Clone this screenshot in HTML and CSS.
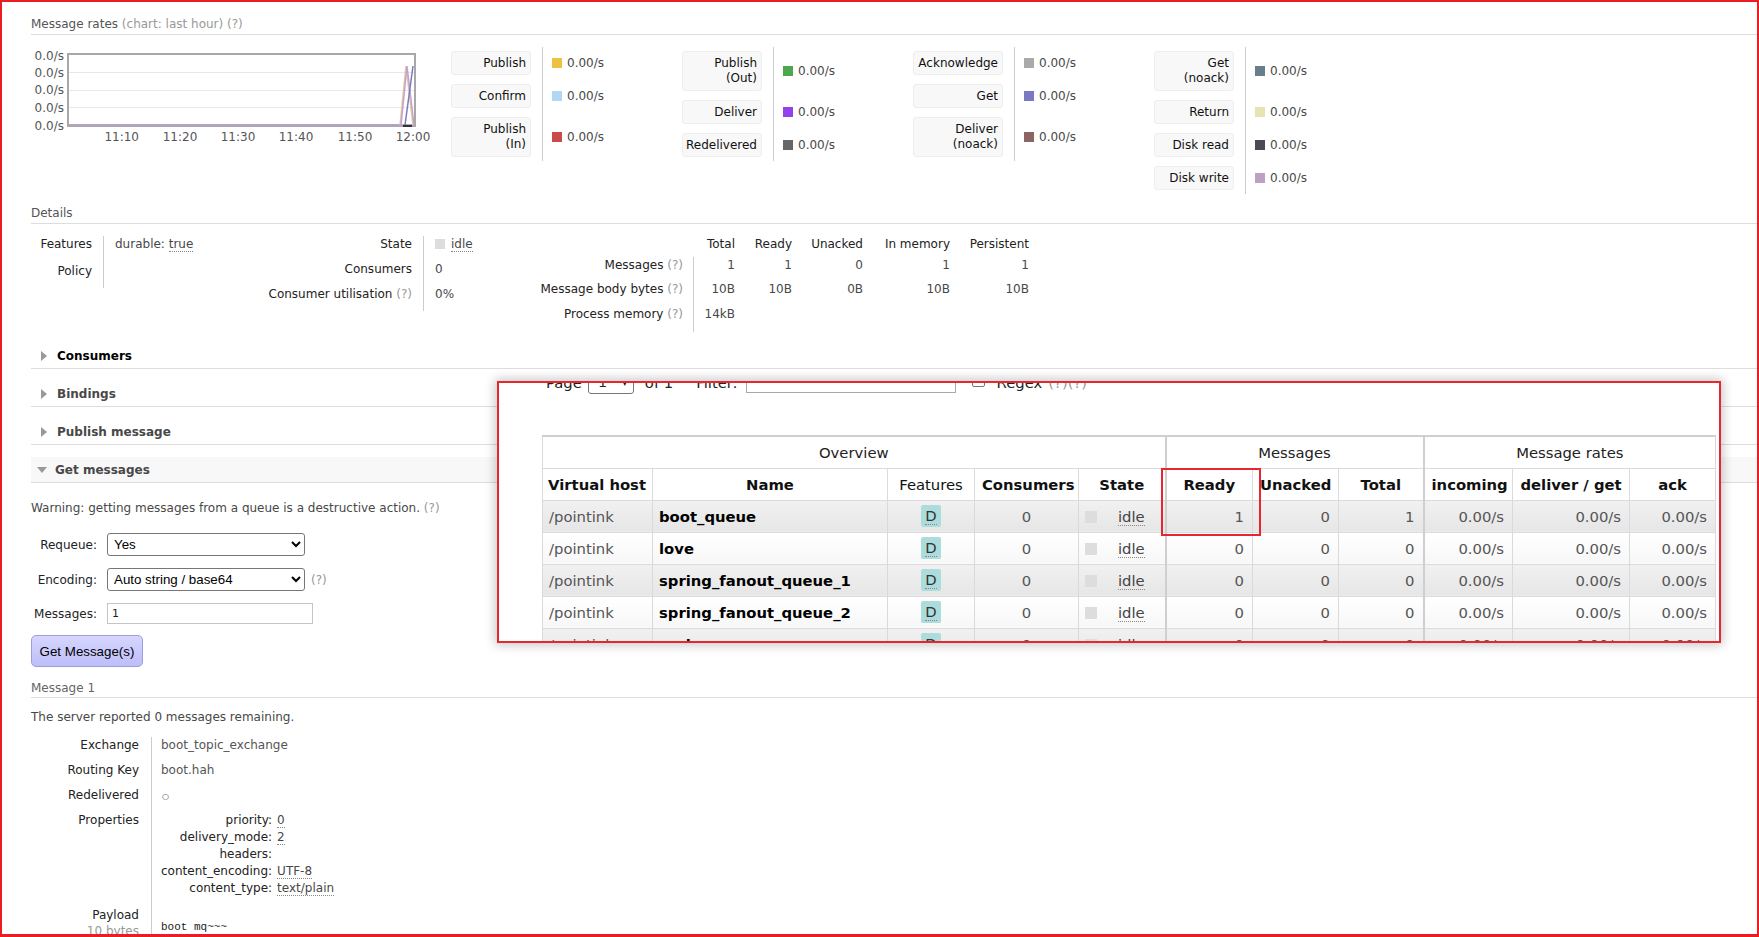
FILE: index.html
```html
<!DOCTYPE html>
<html lang="en">
<head>
<meta charset="utf-8">
<title>Queue boot_queue</title>
<link rel="stylesheet" href="styles.css">
</head>
<body>
<div class="frame">
  <div class="page">
    <h3 class="sec-title">Message rates <span class="muted">(chart: last hour) (?)</span></h3>

    <div class="rates">
      <div class="chart">
        <svg class="chart-svg" width="420" height="100" viewBox="0 0 420 100">
          <line class="gl" x1="38" y1="25.5" x2="383" y2="25.5"/>
          <line class="gl" x1="38" y1="43.5" x2="383" y2="43.5"/>
          <line class="gl" x1="38" y1="60.5" x2="383" y2="60.5"/>
          <rect x="37" y="7" width="347" height="72" fill="none" stroke="#a8a8a8" stroke-width="2"/>
          <line x1="38" y1="78" x2="383" y2="78" stroke="#b8a0c4" stroke-width="2"/>
          <polyline points="369,78 375,19 382,78" fill="none" stroke="#e2c8a6" stroke-width="1.5"/>
          <polyline points="370,78 376,19 383,78" fill="none" stroke="#c4a2c8" stroke-width="1.5"/>
          <line x1="374" y1="78" x2="382" y2="19" stroke="#7c79c3" stroke-width="1.5"/>
          <line x1="372" y1="79" x2="381" y2="79" stroke="#333" stroke-width="2"/>
          <text class="yl" x="33" y="13.4">0.0/s</text>
          <text class="yl" x="33" y="29.7">0.0/s</text>
          <text class="yl" x="33" y="47.4">0.0/s</text>
          <text class="yl" x="33" y="64.7">0.0/s</text>
          <text class="yl" x="33" y="83.4">0.0/s</text>
          <text class="xl" x="90.7" y="94.4">11:10</text>
          <text class="xl" x="149" y="94.4">11:20</text>
          <text class="xl" x="207" y="94.4">11:30</text>
          <text class="xl" x="265" y="94.4">11:40</text>
          <text class="xl" x="324" y="94.4">11:50</text>
          <text class="xl" x="382" y="94.4">12:00</text>
        </svg>
      </div>

      <div class="lg">
        <div class="lg-labels">
          <div class="lbox">Publish</div>
          <div class="lbox">Confirm</div>
          <div class="lbox tall">Publish<br>(In)</div>
        </div>
        <div class="lg-vals">
          <div class="lval"><i class="sw s-publish"></i>0.00/s</div>
          <div class="lval"><i class="sw s-confirm"></i>0.00/s</div>
          <div class="lval tall"><i class="sw s-pubin"></i>0.00/s</div>
        </div>
      </div>

      <div class="lg">
        <div class="lg-labels">
          <div class="lbox tall">Publish<br>(Out)</div>
          <div class="lbox">Deliver</div>
          <div class="lbox">Redelivered</div>
        </div>
        <div class="lg-vals">
          <div class="lval tall"><i class="sw s-pubout"></i>0.00/s</div>
          <div class="lval"><i class="sw s-deliver"></i>0.00/s</div>
          <div class="lval"><i class="sw s-redeliver"></i>0.00/s</div>
        </div>
      </div>

      <div class="lg">
        <div class="lg-labels wide">
          <div class="lbox">Acknowledge</div>
          <div class="lbox">Get</div>
          <div class="lbox tall">Deliver<br>(noack)</div>
        </div>
        <div class="lg-vals">
          <div class="lval"><i class="sw s-ack"></i>0.00/s</div>
          <div class="lval"><i class="sw s-get"></i>0.00/s</div>
          <div class="lval tall"><i class="sw s-delnoack"></i>0.00/s</div>
        </div>
      </div>

      <div class="lg">
        <div class="lg-labels">
          <div class="lbox tall">Get<br>(noack)</div>
          <div class="lbox">Return</div>
          <div class="lbox">Disk read</div>
          <div class="lbox">Disk write</div>
        </div>
        <div class="lg-vals">
          <div class="lval tall"><i class="sw s-getnoack"></i>0.00/s</div>
          <div class="lval"><i class="sw s-return"></i>0.00/s</div>
          <div class="lval"><i class="sw s-diskr"></i>0.00/s</div>
          <div class="lval"><i class="sw s-diskw"></i>0.00/s</div>
        </div>
      </div>
    </div>

    <h3 class="sec-title details-title">Details</h3>
    <div class="details">
      <div class="kv kv-a">
        <div class="k">Features</div><div class="v">durable: <abbr class="dot">true</abbr></div>
        <div class="k">Policy</div><div class="v"></div>
      </div>
      <div class="kv kv-b">
        <div class="k">State</div><div class="v"><span class="state-sq"></span><abbr class="dot">idle</abbr></div>
        <div class="k">Consumers</div><div class="v">0</div>
        <div class="k">Consumer utilisation <span class="muted">(?)</span></div><div class="v">0%</div>
      </div>
      <div class="mtable">
        <div></div><div class="h">Total</div><div class="h">Ready</div><div class="h">Unacked</div><div class="h">In memory</div><div class="h">Persistent</div>
        <div class="k">Messages <span class="muted">(?)</span></div><div class="n first">1</div><div class="n">1</div><div class="n">0</div><div class="n">1</div><div class="n">1</div>
        <div class="k">Message body bytes <span class="muted">(?)</span></div><div class="n first">10B</div><div class="n">10B</div><div class="n">0B</div><div class="n">10B</div><div class="n">10B</div>
        <div class="k">Process memory <span class="muted">(?)</span></div><div class="n first">14kB</div><div class="n"></div><div class="n"></div><div class="n"></div><div class="n"></div>
      </div>
    </div>

    <div class="sec first-sec dark"><span class="tri-r"></span>Consumers</div>
    <div class="sec"><span class="tri-r"></span>Bindings</div>
    <div class="sec"><span class="tri-r"></span>Publish message</div>
    <div class="sec open"><span class="tri-d"></span>Get messages</div>

    <p class="warn">Warning: getting messages from a queue is a destructive action. <span class="muted">(?)</span></p>

    <div class="form">
      <label class="fl">Requeue:</label>
      <div class="fc"><select class="sel"><option>Yes</option><option>No</option></select></div>
      <label class="fl">Encoding:</label>
      <div class="fc"><select class="sel"><option>Auto string / base64</option><option>base64</option></select><span class="muted help">(?)</span></div>
      <label class="fl">Messages:</label>
      <div class="fc"><input class="inp" type="text" value="1"></div>
    </div>
    <button class="btn" type="button">Get Message(s)</button>

    <h3 class="sub-title">Message 1</h3>
    <p class="server">The server reported 0 messages remaining.</p>

    <div class="msg">
      <div class="k">Exchange</div><div class="v">boot_topic_exchange</div>
      <div class="k">Routing Key</div><div class="v">boot.hah</div>
      <div class="k">Redelivered</div><div class="v"><span class="circ">○</span></div>
      <div class="k">Properties</div>
      <div class="v">
        <div class="props">
          <div class="pk">priority:</div><div class="pv"><abbr class="dot">0</abbr></div>
          <div class="pk">delivery_mode:</div><div class="pv"><abbr class="dot">2</abbr></div>
          <div class="pk">headers:</div><div class="pv"></div>
          <div class="pk">content_encoding:</div><div class="pv"><abbr class="dot">UTF-8</abbr></div>
          <div class="pk">content_type:</div><div class="pv"><abbr class="dot">text/plain</abbr></div>
        </div>
      </div>
      <div class="k">Payload<br><span class="muted">10 bytes</span></div>
      <div class="v"><pre class="payload">boot mq~~~</pre></div>
    </div>
  </div>

  <div class="shot">
    <div class="shot-bar">
      <span>Page</span>
      <span class="pg-sel"><span>1</span><span class="pg-arr">▾</span></span>
      <span class="of">of 1</span>
      <span class="flt">Filter:</span>
      <span class="flt-inp"></span>
      <span class="cbx"></span>
      <span class="rgx">Regex</span>
      <span class="muted qq">(?)(?)</span>
    </div>
    <table class="qt">
      <colgroup>
        <col class="w-vh"><col class="w-name"><col class="w-feat"><col class="w-cons"><col class="w-state">
        <col class="w-ready"><col class="w-unack"><col class="w-total"><col class="w-inc"><col class="w-del"><col class="w-ack">
      </colgroup>
      <thead>
        <tr class="grp">
          <th colspan="5">Overview</th>
          <th colspan="3" class="gsep">Messages</th>
          <th colspan="3" class="gsep">Message rates</th>
        </tr>
        <tr class="cols">
          <th class="l">Virtual host</th>
          <th>Name</th>
          <th class="nb">Features</th>
          <th>Consumers</th>
          <th>State</th>
          <th class="gsep">Ready</th>
          <th>Unacked</th>
          <th>Total</th>
          <th class="gsep">incoming</th>
          <th>deliver / get</th>
          <th>ack</th>
        </tr>
      </thead>
      <tbody>
        <tr class="odd">
          <td class="vh">/pointink</td><td class="nm">boot_queue</td>
          <td class="c"><span class="badge"><abbr class="dot">D</abbr></span></td><td class="c">0</td>
          <td class="st"><span class="sq"></span><abbr class="dot">idle</abbr></td>
          <td class="r gsep">1</td><td class="r">0</td><td class="r">1</td>
          <td class="r gsep">0.00/s</td><td class="r">0.00/s</td><td class="r">0.00/s</td>
        </tr>
        <tr class="even">
          <td class="vh">/pointink</td><td class="nm">love</td>
          <td class="c"><span class="badge"><abbr class="dot">D</abbr></span></td><td class="c">0</td>
          <td class="st"><span class="sq"></span><abbr class="dot">idle</abbr></td>
          <td class="r gsep">0</td><td class="r">0</td><td class="r">0</td>
          <td class="r gsep">0.00/s</td><td class="r">0.00/s</td><td class="r">0.00/s</td>
        </tr>
        <tr class="odd">
          <td class="vh">/pointink</td><td class="nm">spring_fanout_queue_1</td>
          <td class="c"><span class="badge"><abbr class="dot">D</abbr></span></td><td class="c">0</td>
          <td class="st"><span class="sq"></span><abbr class="dot">idle</abbr></td>
          <td class="r gsep">0</td><td class="r">0</td><td class="r">0</td>
          <td class="r gsep">0.00/s</td><td class="r">0.00/s</td><td class="r">0.00/s</td>
        </tr>
        <tr class="even">
          <td class="vh">/pointink</td><td class="nm">spring_fanout_queue_2</td>
          <td class="c"><span class="badge"><abbr class="dot">D</abbr></span></td><td class="c">0</td>
          <td class="st"><span class="sq"></span><abbr class="dot">idle</abbr></td>
          <td class="r gsep">0</td><td class="r">0</td><td class="r">0</td>
          <td class="r gsep">0.00/s</td><td class="r">0.00/s</td><td class="r">0.00/s</td>
        </tr>
        <tr class="odd">
          <td class="vh">/pointink</td><td class="nm">spring_queue</td>
          <td class="c"><span class="badge"><abbr class="dot">D</abbr></span></td><td class="c">0</td>
          <td class="st"><span class="sq"></span><abbr class="dot">idle</abbr></td>
          <td class="r gsep">0</td><td class="r">0</td><td class="r">0</td>
          <td class="r gsep">0.00/s</td><td class="r">0.00/s</td><td class="r">0.00/s</td>
        </tr>
      </tbody>
    </table>
    <div class="hl"></div>
  </div>
</div>
</body>
</html>
```

FILE: styles.css
```css
* { box-sizing: border-box; }
html, body { margin: 0; padding: 0; background: #fff; }
body {
  font-family: "DejaVu Sans", Verdana, sans-serif;
  font-size: 12px;
  color: #222;
}
.frame {
  position: relative;
  width: 1759px;
  height: 937px;
  border: 2px solid #ec1c24;
  border-bottom-width: 3px;
  overflow: hidden;
  background: #fff;
}
.page { padding-left: 29px; }
.muted { color: #999; }
abbr.dot { text-decoration: none; border-bottom: 1px dotted #888; }

.sec-title {
  margin: 14px 0 0;
  font-size: 12px;
  font-weight: normal;
  color: #555;
  line-height: 16px;
  padding-bottom: 2px;
  border-bottom: 1px solid #ddd;
}
.details-title { margin-top: 11px; }

/* rates */
.rates { display: flex; align-items: flex-start; margin-top: 12px; }
.chart { width: 420px; flex: none; }
.chart-svg { display: block; }
.chart-svg text { font-family: "DejaVu Sans", Verdana, sans-serif; font-size: 12px; fill: #555; }
.chart-svg .yl { text-anchor: end; }
.chart-svg .xl { text-anchor: middle; }
.chart-svg .gl { stroke: #e8e8e8; stroke-width: 1; }

.lg { display: flex; flex: none; }
.lg-labels {
  width: 80px;
  margin-right: 11px;
  padding: 4px 0;
  display: flex;
  flex-direction: column;
  gap: 9px;
}
.lg-labels.wide { width: 90px; }
.lbox {
  height: 24px;
  background: #f8f8f8;
  border: 1px solid #eee;
  border-radius: 3px;
  padding: 0 4px;
  display: flex;
  flex-direction: column;
  justify-content: center;
  align-items: flex-end;
  text-align: right;
  line-height: 15px;
  color: #111;
  white-space: nowrap;
}
.lbox.tall { height: 40px; }
.lg-vals {
  width: 140px;
  border-left: 1px solid #ccc;
  padding: 4px 0 4px 9px;
  display: flex;
  flex-direction: column;
  gap: 9px;
}
.lval { height: 24px; display: flex; align-items: center; color: #484848; }
.lval.tall { height: 40px; }
.sw { display: block; width: 10px; height: 10px; margin-right: 5px; flex: none; }
.s-publish { background: #edc240; }
.s-confirm { background: #afd8f8; }
.s-pubin { background: #cb4b4b; }
.s-pubout { background: #4da74d; }
.s-deliver { background: #9440ed; }
.s-redeliver { background: #666; }
.s-ack { background: #aaa; }
.s-get { background: #7c79c3; }
.s-delnoack { background: #8d6464; }
.s-getnoack { background: #687f8b; }
.s-return { background: #e6e4b3; }
.s-diskr { background: #4b4a55; }
.s-diskw { background: #bda0c4; }

/* details */
.details { display: flex; align-items: flex-start; margin-top: 12px; }
.kv { display: grid; line-height: 16px; flex: none; }
.kv-a { grid-template-columns: 72px 100px; grid-template-rows: 27px 25px; }
.kv-b { grid-template-columns: 220px 50px; grid-template-rows: 25px 25px 25px; }
.kv .k { text-align: right; padding-right: 11px; color: #222; white-space: nowrap; }
.kv .v { border-left: 1px solid #ccc; padding-left: 11px; color: #484848; white-space: nowrap; }
.state-sq { display: inline-block; width: 10px; height: 10px; background: #ddd; margin-right: 6px; vertical-align: -1px; }

.mtable {
  display: grid;
  flex: none;
  line-height: 16px;
  grid-template-columns: 220px 42px 57px 71px 87px 79px;
  grid-template-rows: 21px 24px 25px 26px;
}
.mtable .h { text-align: right; color: #222; white-space: nowrap; }
.mtable .k { text-align: right; padding-right: 10px; color: #222; white-space: nowrap; }
.mtable .n { text-align: right; color: #484848; white-space: nowrap; }
.mtable .first { border-left: 1px solid #ccc; }

/* collapsible sections */
.sec {
  height: 26px;
  margin-top: 12px;
  border-bottom: 1px solid #ddd;
  display: flex;
  align-items: center;
  padding-left: 10px;
  font-weight: bold;
  color: #484848;
}
.sec.first-sec { margin-top: 11px; }
.sec.dark { color: #000; }
.sec.open { background: #f8f8f8; }
.tri-r {
  width: 0; height: 0;
  border-left: 6px solid #999;
  border-top: 5px solid transparent;
  border-bottom: 5px solid transparent;
  margin-right: 10px;
}
.tri-d {
  width: 0; height: 0;
  border-top: 6px solid #999;
  border-left: 5.5px solid transparent;
  border-right: 5.5px solid transparent;
  margin-left: -4px;
  margin-right: 8px;
}

.warn { margin: 17px 0 0; line-height: 16px; color: #484848; }

.form {
  display: grid;
  grid-template-columns: 66px auto;
  grid-template-rows: 23px 23px 21px;
  column-gap: 10px;
  row-gap: 12px;
  align-items: center;
  margin-top: 17px;
  justify-content: start;
}
.fl { text-align: right; color: #222; white-space: nowrap; }
.fc { display: flex; align-items: center; }
.sel {
  width: 198px;
  height: 23px;
  font-family: "Liberation Sans", Arial, sans-serif;
  font-size: 13.33px;
  color: #000;
  border: 1px solid #767676;
  border-radius: 3px;
  background: #fff;
  padding: 0 2px;
  margin: 0;
}
.help { margin-left: 6px; }
.inp {
  width: 206px;
  height: 21px;
  border: 1px solid #c4c4c4;
  padding: 0 4px;
  margin: 0;
  font-family: "DejaVu Sans", Verdana, sans-serif;
  font-size: 11px;
  color: #222;
}
.btn {
  display: block;
  width: 112px;
  height: 32px;
  margin-top: 11px;
  border: 1px solid #9c9ce2;
  border-radius: 5px;
  background: linear-gradient(#d6d6ff, #bebef9);
  font-family: "Liberation Sans", Arial, sans-serif;
  font-size: 13.33px;
  color: #000;
  padding: 0;
}
.sub-title {
  margin: 13px 0 0;
  font-size: 12px;
  font-weight: normal;
  color: #666;
  line-height: 16px;
  padding-bottom: 1px;
  border-bottom: 1px solid #ddd;
}
.server { margin: 11px 0 0; line-height: 16px; color: #484848; }

.msg {
  display: grid;
  grid-template-columns: 120px auto;
  grid-template-rows: 25px 25px 25px 95px auto;
  justify-content: start;
  margin-top: 12px;
  line-height: 16px;
}
.msg .k { text-align: right; padding-right: 12px; color: #222; white-space: nowrap; }
.msg .v { border-left: 1px solid #ccc; padding-left: 9px; color: #555; }
.circ { font-size: 8px; color: #444; line-height: 16px; padding-left: 1px; }
.props {
  display: grid;
  grid-template-columns: auto auto;
  column-gap: 5px;
  line-height: 17px;
  justify-content: start;
}
.pk { text-align: right; color: #222; white-space: nowrap; }
.pv { color: #484848; white-space: nowrap; }
.payload {
  margin: 0;
  padding-top: 13px;
  font-family: "Liberation Mono", "DejaVu Sans Mono", monospace;
  font-size: 11px;
  line-height: 14px;
  color: #222;
}

/* pasted screenshot overlay */
.shot {
  position: absolute;
  left: 495px;
  top: 379px;
  width: 1224px;
  height: 262px;
  border: 2px solid #e8262d;
  background: #fff;
  box-shadow: 0 0 10px 2px rgba(0, 0, 0, 0.22);
  overflow: hidden;
  font-size: 14.8px;
  color: #222;
}
.shot-bar {
  display: flex;
  align-items: center;
  height: 26px;
  margin-top: -14px;
  padding-left: 47px;
  white-space: nowrap;
}
.pg-sel {
  width: 46px;
  height: 24px;
  margin-left: 6px;
  border: 1px solid #767676;
  border-radius: 3px;
  display: flex;
  align-items: center;
  justify-content: space-between;
  padding: 0 5px 0 10px;
  font-family: "Liberation Sans", Arial, sans-serif;
  font-size: 14px;
}
.pg-arr { font-size: 11px; }
.of { margin-left: 11px; }
.flt { margin-left: 23px; }
.flt-inp { width: 210px; height: 22px; margin-left: 8px; border: 1px solid #a9a9a9; }
.cbx { width: 13px; height: 13px; margin-left: 16px; border: 1px solid #767676; border-radius: 2px; margin-top: -3px; }
.rgx { margin-left: 12px; }
.qq { margin-left: 6px; }

.qt {
  border-collapse: collapse;
  table-layout: fixed;
  width: 1173px;
  margin: 40px 0 0 43px;
  font-size: 14.8px;
}
.w-vh { width: 110px; }
.w-name { width: 235px; }
.w-feat { width: 87px; }
.w-cons { width: 104px; }
.w-state { width: 87px; }
.w-ready { width: 87px; }
.w-unack { width: 86px; }
.w-total { width: 85px; }
.w-inc { width: 89px; }
.w-del { width: 117px; }
.w-ack { width: 86px; }
.qt th, .qt td {
  height: 32px;
  padding: 0 7px;
  border: 1px solid #dadada;
  white-space: nowrap;
  overflow: hidden;
  vertical-align: middle;
}
.qt th { text-align: center; color: #111; background: #fff; }
.qt tr.grp th { font-weight: normal; color: #222; border-top: 2px solid #cfcfcf; }
.qt tr.cols th { font-weight: bold; }
.qt tr.cols th.nb { font-weight: normal; }
.qt th.l { text-align: left; padding-left: 5px; }
.qt .gsep { border-left: 2px solid #cfcfcf; }
.qt tr.odd td { background: linear-gradient(#f1f1f1, #e6e6e6); }
.qt tr.even td { background: linear-gradient(#ffffff, #f7f7f7); }
.qt td.vh { color: #555; padding-left: 6px; }
.qt td.nm { font-weight: bold; color: #000; padding-left: 6px; }
.qt td.c { text-align: center; color: #555; }
.qt td.r { text-align: right; color: #555; padding-right: 8px; }
.qt td.st { padding-left: 6px; color: #444; }
.badge {
  display: inline-block;
  width: 20px;
  height: 22px;
  line-height: 21px;
  background: #acdcdc;
  border-radius: 2px;
  color: #333;
  text-align: center;
}
.sq {
  display: inline-block;
  width: 12px;
  height: 12px;
  background: #ddd;
  margin-right: 21px;
  vertical-align: -1px;
}
.hl {
  position: absolute;
  left: 662px;
  top: 85px;
  width: 100px;
  height: 68px;
  border: 2px solid #e8262d;
}
```
